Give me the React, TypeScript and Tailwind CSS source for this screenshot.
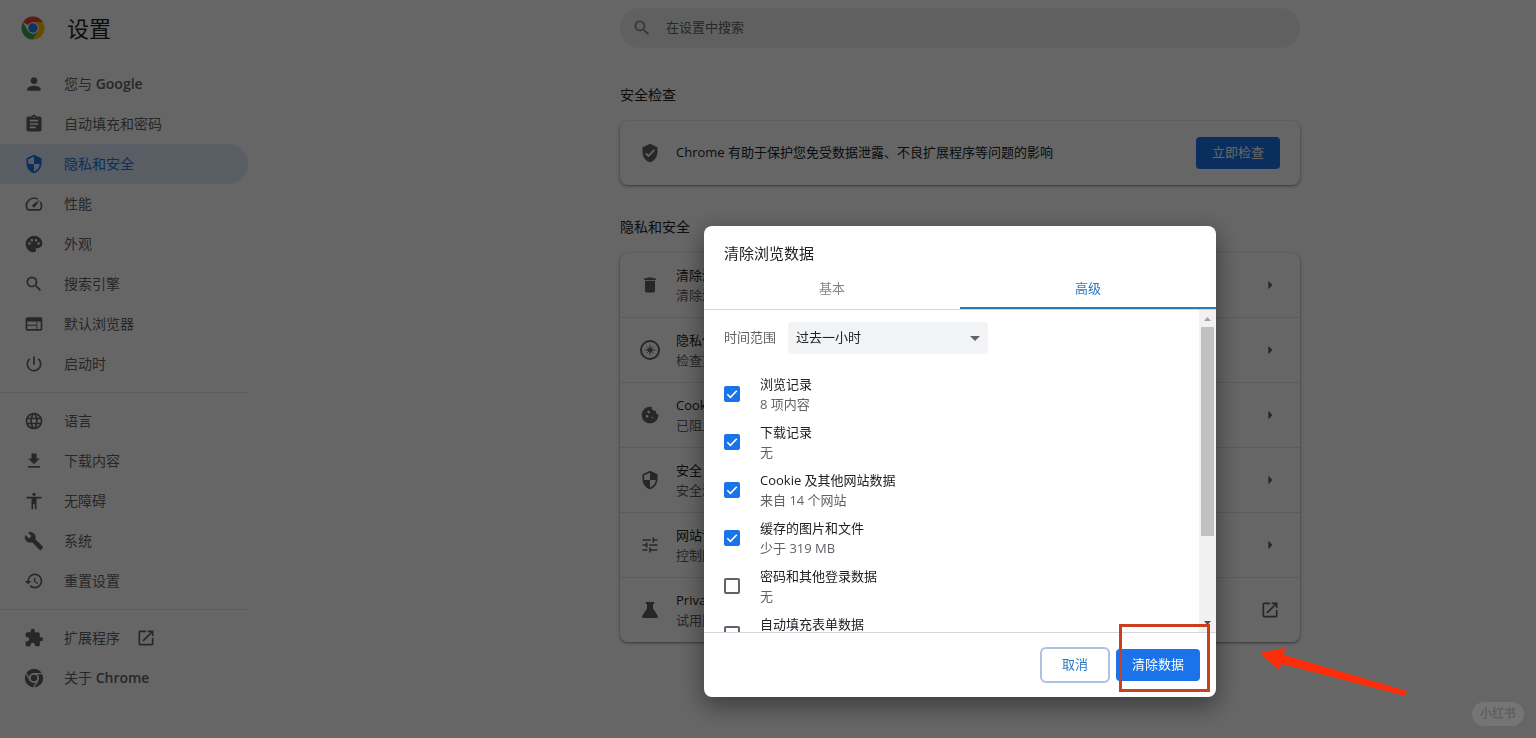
import React from 'react';
import type { IconType } from 'react-icons';
import {
  MdAccessibility,
  MdArrowRight,
  MdArrowDropDown,
  MdAssignment,
  MdBuild,
  MdCookie,
  MdDelete,
  MdExtension,
  MdFileDownload,
  MdHistory,
  MdLanguage,
  MdOpenInNew,
  MdPalette,
  MdPerson,
  MdPowerSettingsNew,
  MdSearch,
  MdSecurity,
  MdSpeed,
  MdTune,
  MdVerifiedUser,
  MdWeb,
} from 'react-icons/md';

type IconComponent = IconType | React.ComponentType<{ className?: string }>;

interface NavItem {
  icon: IconComponent;
  label: string;
  latin?: string;
  active?: boolean;
  external?: boolean;
}

interface SettingRow {
  icon: IconComponent;
  title: string;
  description: string;
  external?: boolean;
}

interface DataItem {
  title: string;
  detail: string;
  checked: boolean;
}

function ChromeLogo() {
  return (
    <svg viewBox="0 0 48 48" className="w-6 h-6" aria-hidden="true">
      <path d="M24 24 4.08 12.5A23 23 0 0 1 43.92 12.5H24Z" fill="#ea4335" />
      <path d="M24 12.5h19.92A23 23 0 0 1 24 47l9.96-17.25Z" fill="#fbbc04" />
      <path d="M4.08 12.5 14.04 29.75 24 35.5l9.96-5.75L24 47A23 23 0 0 1 4.08 12.5Z" fill="#34a853" />
      <circle cx="24" cy="24" r="11.5" fill="#fff" />
      <circle cx="24" cy="24" r="9.5" fill="#2f7de9" />
    </svg>
  );
}

function ChromeIcon({ className }: { className?: string }) {
  return (
    <svg viewBox="0 0 24 24" className={className} fill="none" stroke="currentColor" aria-hidden="true">
      <circle cx="12" cy="12" r="4" fill="currentColor" stroke="none" />
      <circle cx="12" cy="12" r="8.6" strokeWidth="5" />
      <path d="M12 6.6h10M7.32 14.7 2.3 6M16.68 14.7 11.7 23.3" stroke="#fff" strokeWidth="1.5" />
    </svg>
  );
}

function CompassIcon({ className }: { className?: string }) {
  return (
    <svg viewBox="0 0 20 20" className={className} aria-hidden="true">
      <circle cx="10" cy="10" r="9" fill="none" stroke="currentColor" strokeWidth="2" />
      <path d="M10 3.500 11 9l5.500 1-5.500 1-1 5.500L9 11l-5.500-1L9 9Z" fill="currentColor" />
      <path d="m6.700 6.700 6.600 6.600m0-6.600-6.600 6.600" stroke="currentColor" strokeWidth=".9" />
    </svg>
  );
}

function FlaskIcon({ className }: { className?: string }) {
  return (
    <svg viewBox="0 0 20 20" className={className} fill="currentColor" aria-hidden="true">
      <path d="M5.800 2h8.400v2H13v4.500l4.700 7.200c.7 1.100 0 2.300-1.200 2.300h-13c-1.200 0-1.900-1.200-1.200-2.300L7 8.500V4H5.800Z" />
    </svg>
  );
}

const navGroups: NavItem[][] = [
  [
    { icon: MdPerson, label: '您与', latin: 'Google' },
    { icon: MdAssignment, label: '自动填充和密码' },
    { icon: MdSecurity, label: '隐私和安全', active: true },
    { icon: MdSpeed, label: '性能' },
    { icon: MdPalette, label: '外观' },
    { icon: MdSearch, label: '搜索引擎' },
    { icon: MdWeb, label: '默认浏览器' },
    { icon: MdPowerSettingsNew, label: '启动时' },
  ],
  [
    { icon: MdLanguage, label: '语言' },
    { icon: MdFileDownload, label: '下载内容' },
    { icon: MdAccessibility, label: '无障碍' },
    { icon: MdBuild, label: '系统' },
    { icon: MdHistory, label: '重置设置' },
  ],
  [
    { icon: MdExtension, label: '扩展程序', external: true },
    { icon: ChromeIcon, label: '关于', latin: 'Chrome' },
  ],
];

const settingRows: SettingRow[] = [
  { icon: MdDelete, title: '清除浏览数据', description: '清除浏览记录、Cookie、缓存及其他数据' },
  { icon: CompassIcon, title: '隐私保护指南', description: '检查重要的隐私和安全控制设置' },
  { icon: MdCookie, title: 'Cookie 及其他网站数据', description: '已阻止无痕模式下的第三方 Cookie' },
  { icon: MdSecurity, title: '安全', description: '安全浏览和其他安全设置' },
  { icon: MdTune, title: '网站设置', description: '控制网站可以使用和显示的信息' },
  { icon: FlaskIcon, title: 'Privacy Sandbox', description: '试用版功能已开启', external: true },
];

const dataItems: DataItem[] = [
  { title: '浏览记录', detail: '8 项内容', checked: true },
  { title: '下载记录', detail: '无', checked: true },
  { title: 'Cookie 及其他网站数据', detail: '来自 14 个网站', checked: true },
  { title: '缓存的图片和文件', detail: '少于 319 MB', checked: true },
  { title: '密码和其他登录数据', detail: '无', checked: false },
  { title: '自动填充表单数据', detail: '无', checked: false },
];

function Sidebar() {
  return (
    <nav className="w-1/4 shrink-0 pt-2">
      {navGroups.map((group, index) => (
        <ul key={index} className={index > 0 ? 'w-[248px] mt-2 pt-2 border-t border-[#e4e4e4]' : 'w-[248px]'}>
          {group.map(({ icon: Icon, label, latin, active, external }) => (
            <li key={label}>
              <a
                href="#"
                className={`flex items-center h-10 pl-6 gap-5 rounded-r-full text-sm ${
                  active ? 'bg-[#dfe8f9] text-[#1a73e8]' : 'text-[#5f6368]'
                }`}
              >
                <Icon className="w-5 h-5 shrink-0" />
                <span>
                  {label}
                  {latin && <span className="font-semibold"> {latin}</span>}
                </span>
                {external && <MdOpenInNew className="w-5 h-5 -ml-1" />}
              </a>
            </li>
          ))}
        </ul>
      ))}
    </nav>
  );
}

function SettingsPage() {
  return (
    <div className="min-h-screen bg-white text-[#202124]">
      <header className="flex items-center h-14">
        <div className="flex items-center w-1/4 pl-[21px] gap-[22px]">
          <ChromeLogo />
          <h1 className="text-[22px] leading-8">设置</h1>
        </div>
        <div className="flex flex-1 justify-center">
          <label className="flex items-center w-full max-w-[680px] h-10 px-3 gap-3.5 rounded-full bg-[#f1f1f1] text-[#80868b]">
            <MdSearch className="w-5 h-5" />
            <input
              type="search"
              aria-label="在设置中搜索"
              placeholder="在设置中搜索"
              className="flex-1 bg-transparent text-[13px] outline-none placeholder:text-[#5f6368]"
            />
          </label>
        </div>
      </header>

      <div className="flex">
        <Sidebar />
        <main className="flex flex-1 justify-center">
          <div className="w-full max-w-[680px] pt-[27px]">
            <h2 className="mb-3.5 text-sm leading-6">安全检查</h2>
            <section className="flex items-center h-16 px-5 gap-4 rounded-lg bg-white shadow-[0_1px_2px_rgba(60,64,67,0.4),0_1px_3px_1px_rgba(60,64,67,0.2)]">
              <MdVerifiedUser className="w-5 h-5 text-[#5f6368]" />
              <p className="flex-1 text-[13px]">Chrome 有助于保护您免受数据泄露、不良扩展程序等问题的影响</p>
              <button type="button" className="h-8 px-4 rounded bg-[#1a73e8] text-[13px] text-white">
                立即检查
              </button>
            </section>

            <h2 className="mt-[30px] mb-3.5 text-sm leading-6">隐私和安全</h2>
            <section className="rounded-lg bg-white divide-y divide-[#e4e4e4] shadow-[0_1px_2px_rgba(60,64,67,0.4),0_1px_3px_1px_rgba(60,64,67,0.2)]">
              {settingRows.map(({ icon: Icon, title, description, external }) => (
                <a key={title} href="#" className="flex items-center px-5 py-3 gap-4 text-[13px] leading-5">
                  <Icon className="w-5 h-5 text-[#5f6368]" />
                  <span className="flex-1">
                    <span className="block">{title}</span>
                    <span className="block text-[#5f6368]">{description}</span>
                  </span>
                  {external ? (
                    <MdOpenInNew className="w-5 h-5 text-[#5f6368]" />
                  ) : (
                    <MdArrowRight className="w-5 h-5 text-[#5f6368]" />
                  )}
                </a>
              ))}
            </section>
          </div>
        </main>
      </div>
    </div>
  );
}

function Scrollbar() {
  return (
    <div className="flex flex-col items-center w-[17px] bg-[#f1f1f1]" aria-hidden="true">
      <svg viewBox="0 0 17 17" className="w-[17px] h-[17px]">
        <path d="M5 11h7L8.500 7Z" fill="#a3a3a3" />
      </svg>
      <div className="w-[13px] h-[209px] bg-[#c1c1c1]" />
      <svg viewBox="0 0 17 17" className="w-[17px] h-[17px] mt-auto">
        <path d="M5 6h7l-3.500 4Z" fill="#505050" />
      </svg>
    </div>
  );
}

function DataCheckbox({ item }: { item: DataItem }) {
  return (
    <label className="flex items-center h-12 gap-5">
      <span className="relative flex w-4 h-4">
        <input
          type="checkbox"
          defaultChecked={item.checked}
          className="peer appearance-none w-4 h-4 rounded-xs border-2 border-[#5f6368] checked:border-[#1a73e8] checked:bg-[#1a73e8]"
        />
        <svg
          viewBox="0 0 16 16"
          className="absolute inset-0 w-4 h-4 pointer-events-none opacity-0 peer-checked:opacity-100"
          aria-hidden="true"
        >
          <path d="m3.300 8.300 3.100 3.100 6.400-6.600" fill="none" stroke="#fff" strokeWidth="1.600" />
        </svg>
      </span>
      <span className="text-[13px] leading-5">
        <span className="block">{item.title}</span>
        <span className="block text-[#5f6368]">{item.detail}</span>
      </span>
    </label>
  );
}

function ClearDataDialog() {
  return (
    <div
      role="dialog"
      aria-labelledby="dialog-title"
      className="relative w-[512px] rounded-lg bg-white text-[#202124] shadow-[0_8px_24px_2px_rgba(0,0,0,0.4)]"
    >
      <h2 id="dialog-title" className="px-5 pt-[15px] text-[15px] leading-6">
        清除浏览数据
      </h2>

      {/* Tabs */}
      <div role="tablist" className="flex h-[45px] border-b border-gray-300 text-[13px]">
        <button type="button" role="tab" aria-selected="false" className="flex-1 pt-1 text-[#80868b]">
          基本
        </button>
        <button
          type="button"
          role="tab"
          aria-selected="true"
          className="flex-1 pt-1.5 border-b-2 border-[#2a7ab8] text-[#2a78c0]"
        >
          高级
        </button>
      </div>

      {/* Body */}
      <div className="flex h-[322px]">
        <div className="flex-1 px-5 pt-3 overflow-hidden">
          <div className="flex items-center mb-4 gap-3 text-[13px]">
            <label htmlFor="time-range" className="text-[#5f6368]">
              时间范围
            </label>
            <div className="relative w-[200px]">
              <select
                id="time-range"
                className="appearance-none w-full h-8 px-2 rounded bg-[#f1f3f4] text-[#202124]"
              >
                <option>过去一小时</option>
              </select>
              <MdArrowDropDown className="absolute right-px top-1 w-6 h-6 text-[#5f6368] pointer-events-none" />
            </div>
          </div>
          {dataItems.map((item) => (
            <DataCheckbox key={item.title} item={item} />
          ))}
        </div>
        <Scrollbar />
      </div>

      {/* Footer */}
      <div className="flex justify-end px-4 py-4 gap-2 border-t border-gray-300 text-[13px]">
        <button
          type="button"
          className="h-8 px-5 rounded ring-2 ring-[#adc4de] text-[#2a78c0]"
        >
          取消
        </button>
        <button type="button" className="h-8 px-4 rounded bg-[#1a73e8] text-white">
          清除数据
        </button>
      </div>

      {/* Highlight around the confirm button */}
      <div className="absolute right-1.5 bottom-[5px] w-[91px] h-[68px] border-3 border-[#c8401f] pointer-events-none" />
      <svg viewBox="0 0 148 50" className="absolute left-[556px] bottom-0 w-[148px] h-[50px]" aria-hidden="true">
        <path d="M0 6 25 1l-1 7 123 36-1.500 5L22 17l-3 6Z" fill="#fc2b08" />
      </svg>
    </div>
  );
}

export default function App() {
  return (
    <div className="relative font-['Open_Sans','Noto_Sans_CJK_SC',sans-serif]">
      <SettingsPage />
      <div className="fixed inset-0 flex items-start justify-center pl-[25%] pt-[226px] bg-black/60">
        <ClearDataDialog />
      </div>
      <div className="fixed right-3 bottom-3 px-2 rounded-full bg-[#757575] text-xs leading-6 font-bold text-[#606060]">
        小红书
      </div>
    </div>
  );
}
